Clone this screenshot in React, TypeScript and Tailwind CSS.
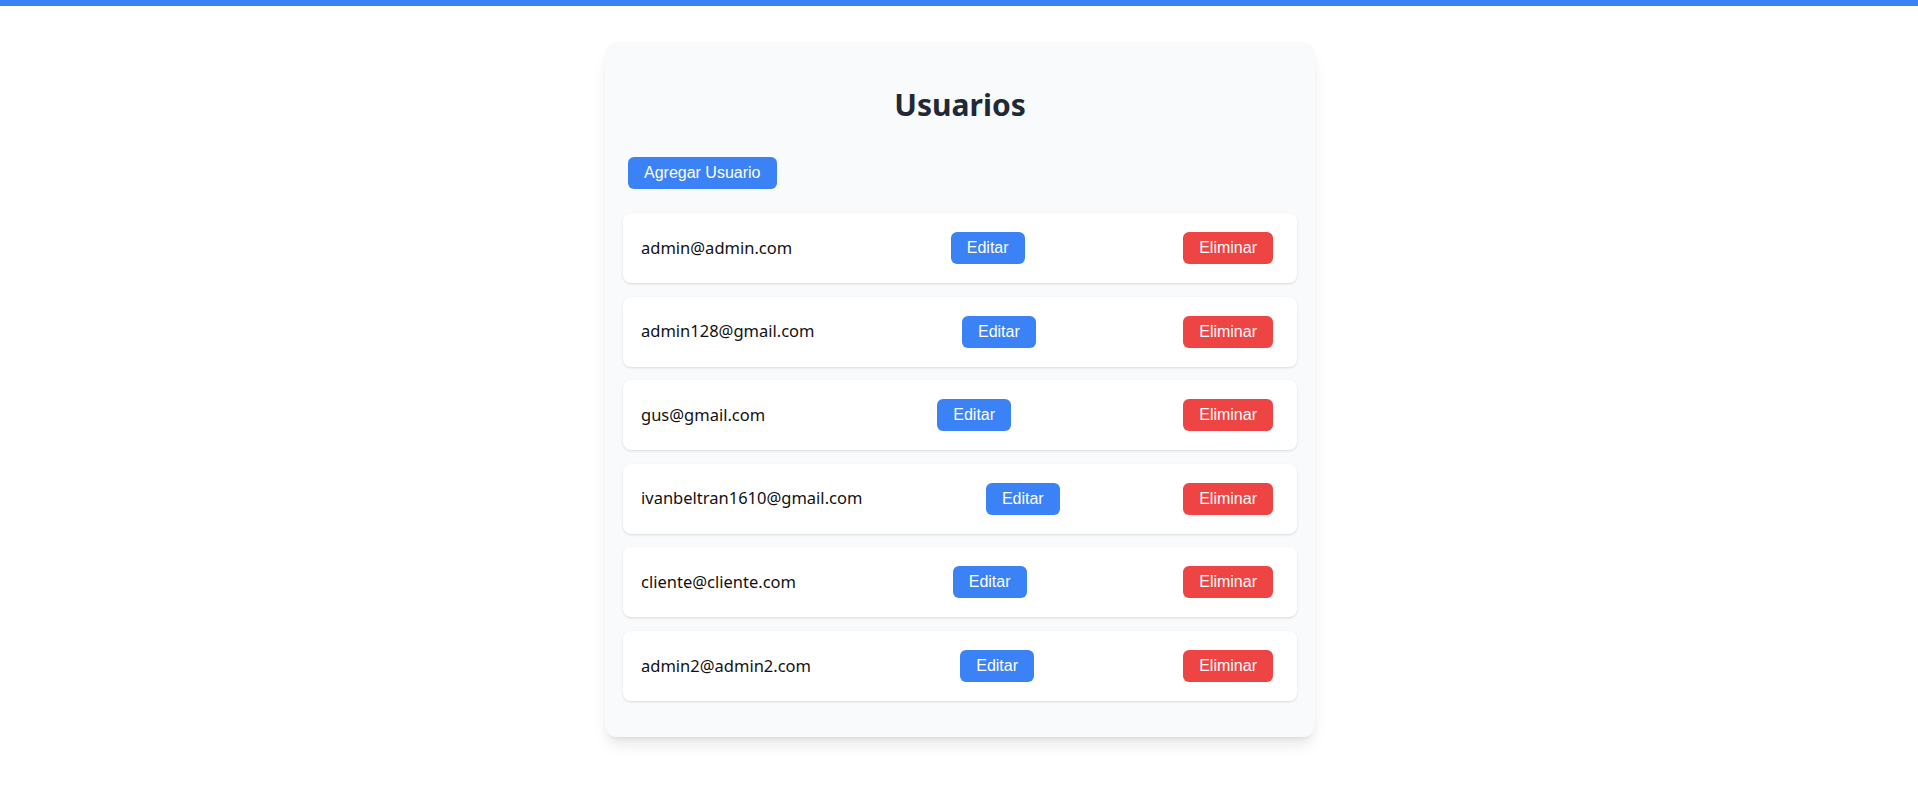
const users = [
  'admin@admin.com',
  'admin128@gmail.com',
  'gus@gmail.com',
  'ivanbeltran1610@gmail.com',
  'cliente@cliente.com',
  'admin2@admin2.com',
];

const btn = "px-4 py-1 rounded-md text-white text-base leading-6 font-['Liberation_Sans',Arial,sans-serif]";

export default function App() {
  return (
    <div className="min-h-screen bg-white">
      <div className="h-1.5 bg-[#3b82f6]" />
      <div className="mt-9 mx-auto w-[710px] translate-x-px rounded-xl bg-[#f9fafb] shadow-lg px-[18px] pt-[45px] pb-9">
        <h1 className="text-center text-3xl font-bold text-[#1f2937] font-['Noto_Sans',sans-serif]">
          Usuarios
        </h1>
        <button type="button" className={`${btn} mt-[34px] ml-[5px] bg-[#3b82f6]`}>
          Agregar Usuario
        </button>
        <ul className="mt-6 flex flex-col gap-[13.6px]">
          {users.map((email) => (
            <li
              key={email}
              className="h-[70px] flex items-center justify-between pl-[18px] pr-6 bg-white rounded-lg shadow-sm"
            >
              <span className="text-[16.5px] text-[#111] font-['Noto_Sans',sans-serif]">{email}</span>
              <button type="button" className={`${btn} bg-[#3b82f6]`}>
                Editar
              </button>
              <button type="button" className={`${btn} bg-[#ef4444]`}>
                Eliminar
              </button>
            </li>
          ))}
        </ul>
      </div>
    </div>
  );
}
